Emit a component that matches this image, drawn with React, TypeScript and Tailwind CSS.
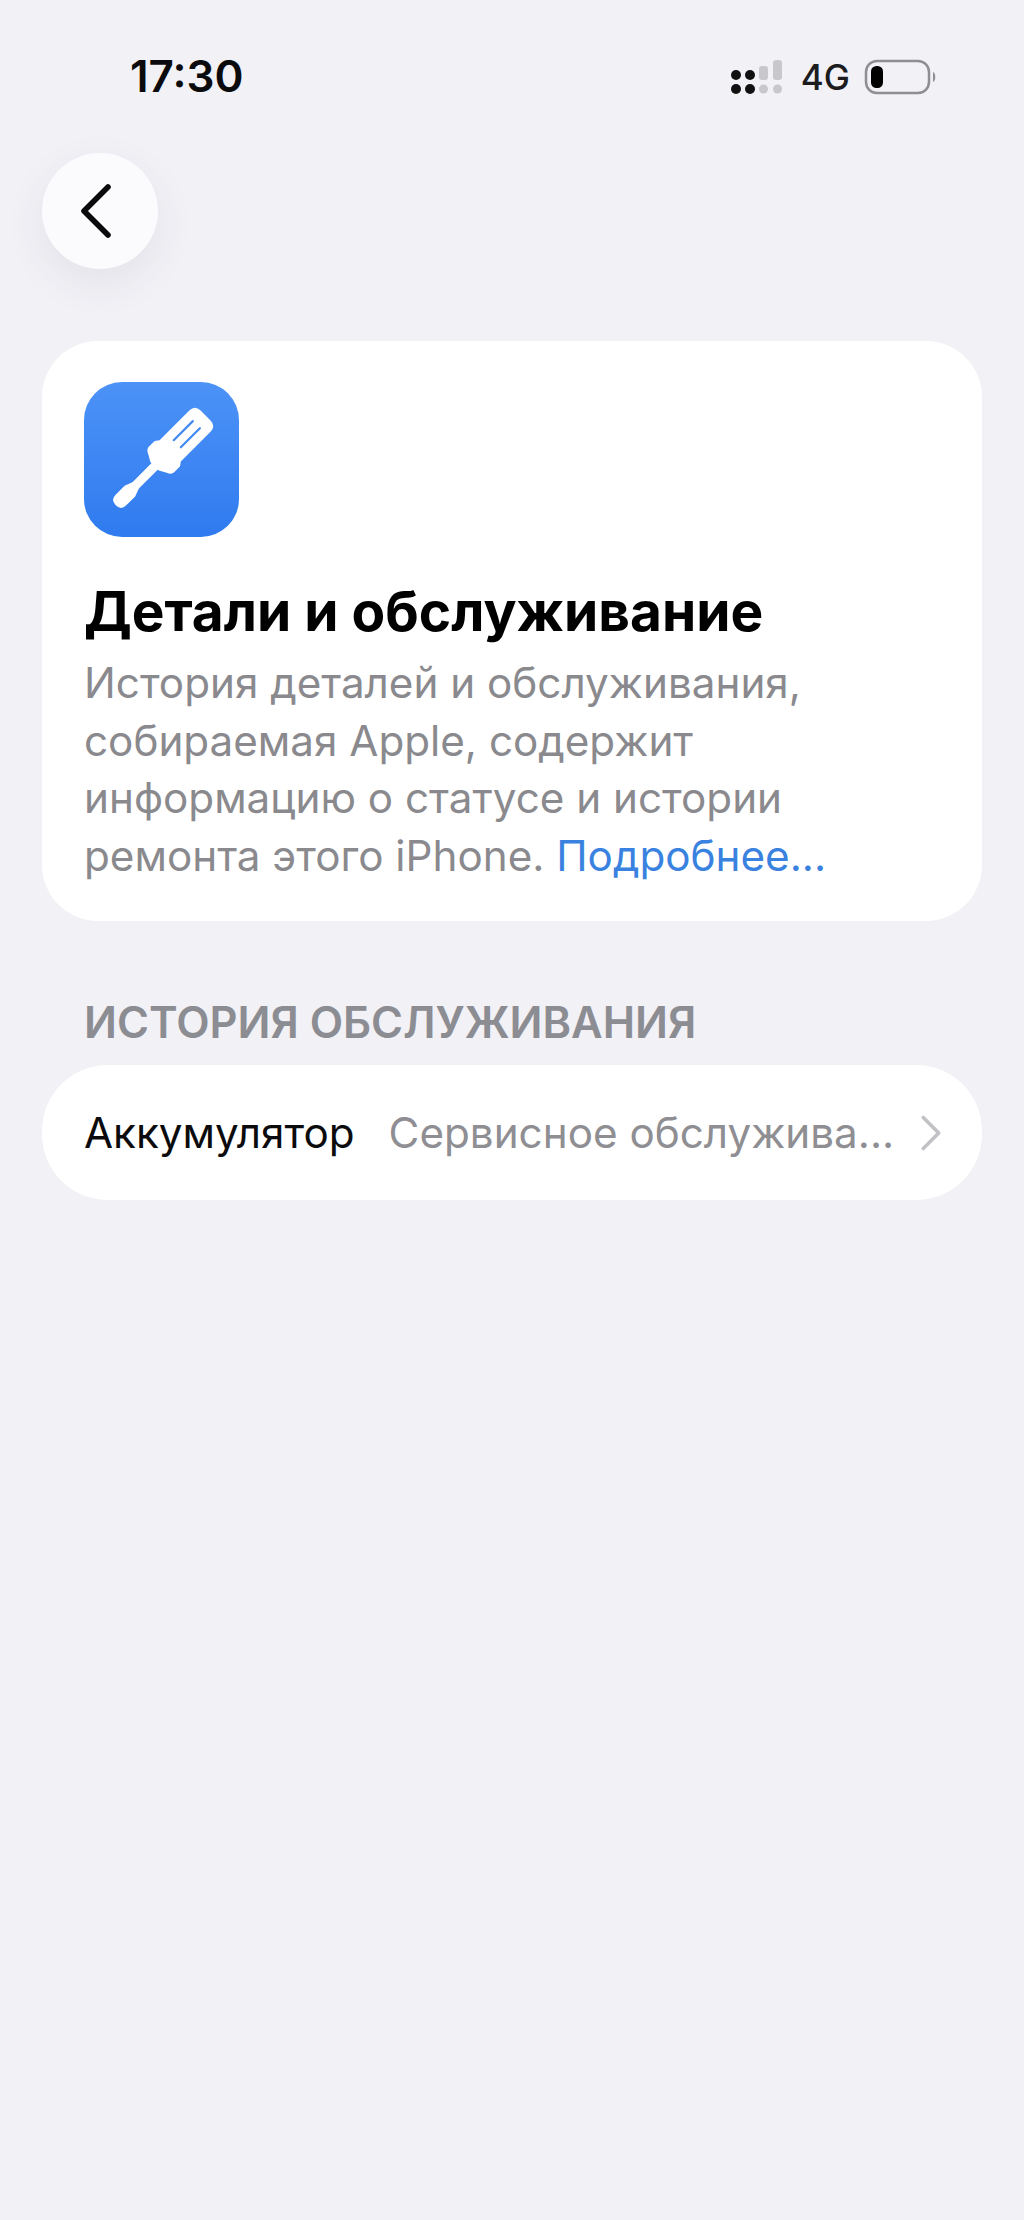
import { ChevronLeft, ChevronRight } from "lucide-react";

function SignalIcon() {
  return (
    <svg width="54" height="34" viewBox="0 0 54 34">
      <circle cx="5" cy="15" r="5" fill="#111" />
      <circle cx="5" cy="29" r="5" fill="#111" />
      <circle cx="19" cy="15" r="5" fill="#111" />
      <circle cx="19" cy="29" r="5" fill="#111" />
      <rect x="28" y="6" width="9" height="14" rx="3" fill="#c8c8cc" />
      <circle cx="32.5" cy="29" r="4.5" fill="#c8c8cc" />
      <rect x="42" y="0" width="9" height="20" rx="3" fill="#c8c8cc" />
      <circle cx="46.5" cy="29" r="4.5" fill="#c8c8cc" />
    </svg>
  );
}

function BatteryIcon() {
  return (
    <svg width="74" height="36" viewBox="0 0 74 36">
      <rect x="2" y="2" width="63" height="32" rx="11" fill="none" stroke="#8e8e93" strokeWidth="2.5" />
      <rect x="7" y="7" width="12" height="22" rx="5.5" fill="#000" />
      <path d="M69 13 C72 14 72 22 69 23 Z" fill="#8e8e93" />
    </svg>
  );
}

function ScrewdriverIcon() {
  return (
    <svg width="155" height="155" viewBox="0 0 155 155">
      <g transform="translate(77 78) rotate(45)">
        <path
          d="M-15 -55 Q-15 -63 -7 -63 H7 Q15 -63 15 -55 V-13 L18 -9 V-1 Q18 3 13 5 L6 9 H-6 L-13 5 Q-18 3 -18 -1 V-9 L-15 -13 Z"
          fill="#fff"
        />
        <rect x="-4.5" y="7" width="9" height="32" fill="#fff" />
        <path d="M-4.5 36 L-7.5 44 V57 Q-7.5 64 0 64 Q7.5 64 7.5 57 V44 L4.5 36 Z" fill="#fff" />
        <line x1="-5" y1="-50" x2="-5" y2="-23" stroke="#4389f3" strokeWidth="2.2" strokeLinecap="round" />
        <line x1="5" y1="-50" x2="5" y2="-23" stroke="#4389f3" strokeWidth="2.2" strokeLinecap="round" />
      </g>
    </svg>
  );
}

export default function App() {
  return (
    <div className="min-h-[2220px] w-full bg-[#f1f1f6] font-['Inter','Noto_Sans',sans-serif]">
      <div className="flex h-[153px] items-start justify-between pl-[130px] pr-[86px] pt-[52px]">
        <span className="text-[44px] leading-[48px] font-semibold text-[#0b0b0d]">17:30</span>
        <div className="flex items-center pt-[5px]">
          <SignalIcon />
          <span className="ml-[16px] mr-[14px] text-[35px] leading-[40px] font-medium text-[#1c1c1e]">4G</span>
          <BatteryIcon />
        </div>
      </div>

      <div className="px-[42px]">
        <button className="flex h-[116px] w-[116px] items-center justify-center rounded-full bg-[#fbfbfe] shadow-[0_14px_40px_rgba(60,60,80,0.08)]">
          <ChevronLeft size={96} strokeWidth={1.4} className="mr-[8px] shrink-0 text-[#0b0b0d]" />
        </button>

        <div className="mt-[72px] h-[580px] rounded-[56px] bg-white pl-[42px] pr-[120px] pt-[41px]">
          <div className="h-[155px] w-[155px] rounded-[38px] bg-gradient-to-b from-[#4c92f7] to-[#2f7bef]">
            <ScrewdriverIcon />
          </div>
          <h1 className="mt-[43px] text-[55px] leading-[62px] font-bold text-black">Детали и обслуживание</h1>
          <p className="mt-[12px] text-[42.2px] leading-[57.5px] text-[#8a8a8e]">
            История деталей и обслуживания, собираемая Apple, содержит информацию о статусе и истории ремонта этого
            iPhone. <span className="text-[#3a82e0]">Подробнее...</span>
          </p>
        </div>

        <div className="mt-[77px] pl-[42px] text-[43.4px] leading-[48px] font-semibold text-[#8c8c93]">
          ИСТОРИЯ ОБСЛУЖИВАНИЯ
        </div>

        <div className="mt-[19px] flex h-[135px] items-center rounded-[66px] bg-white pl-[42px] pr-[20px]">
          <span className="text-[42.2px] leading-[50px] text-[#0b0b0d]">Аккумулятор</span>
          <span className="ml-[34px] flex-1 truncate text-[42.2px] leading-[50px] text-[#8e8e93]">Сервисное обслужива...</span>
          <ChevronRight size={62} strokeWidth={1.4} className="shrink-0 text-[#c2c2c6]" />
        </div>
      </div>
    </div>
  );
}
